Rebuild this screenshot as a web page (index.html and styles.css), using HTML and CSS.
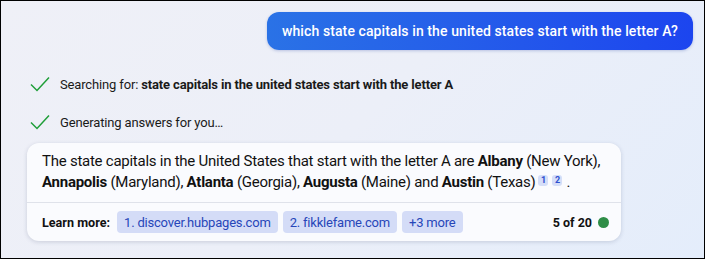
FILE: index.html
```html
<!DOCTYPE html>
<html>
<head>
<meta charset="utf-8">
<link rel="stylesheet" href="styles.css">
</head>
<body>
<div class="frame">
  <div class="user-row">
    <div class="bubble">which state capitals in the united states start with the letter A?</div>
  </div>
  <div class="status">
    <svg class="check" width="20" height="16" viewBox="0 0 20 16"><path d="M1 8.5 L7 14.5 L19 1.5" fill="none" stroke="#1f9e38" stroke-width="1.5"/></svg>
    <span>Searching for: <b>state capitals in the united states start with the letter A</b></span>
  </div>
  <div class="status second">
    <svg class="check" width="20" height="16" viewBox="0 0 20 16"><path d="M1 8.5 L7 14.5 L19 1.5" fill="none" stroke="#1f9e38" stroke-width="1.5"/></svg>
    <span>Generating answers for you…</span>
  </div>
  <div class="card">
    <div class="answer">The state capitals in the United States that start with the letter A are <b>Albany</b> (New York), <b>Annapolis</b> (Maryland), <b>Atlanta</b> (Georgia), <b>Augusta</b> (Maine) and <b>Austin</b> (Texas)<span class="refs"><span class="ref">1</span><span class="ref">2</span></span>.</div>
    <div class="footer">
      <span class="learn">Learn more:</span>
      <span class="chip">1. discover.hubpages.com</span>
      <span class="chip">2. fikklefame.com</span>
      <span class="chip">+3 more</span>
      <span class="count">5 of 20</span>
      <span class="dot"></span>
    </div>
  </div>
</div>
</body>
</html>
```
FILE: styles.css
```css
* { box-sizing: border-box; }
html, body { margin: 0; padding: 0; }
body {
  width: 705px;
  height: 259px;
  font-family: Roboto, "Liberation Sans", sans-serif;
  color: #111;
}
.frame {
  width: 705px;
  height: 259px;
  border: 1px solid #000;
  background: linear-gradient(135deg, #eff0f7 0%, #eceff8 50%, #e4edfb 100%);
  padding: 11px 11px 0 26px;
  display: flex;
  flex-direction: column;
}
.user-row {
  display: flex;
  justify-content: flex-end;
}
.bubble {
  height: 38px;
  display: flex;
  align-items: center;
  padding: 0 15px;
  border-radius: 12px;
  background: linear-gradient(90deg, #2a72e6 0%, #2357eb 60%, #1c45ef 100%);
  color: #fff;
  font-size: 14px;
  letter-spacing: 0.1px;
  font-weight: 500;
  box-shadow: 0 1px 3px rgba(30,60,160,0.25);
}
.status {
  display: flex;
  align-items: center;
  gap: 10px;
  margin-top: 26px;
  padding-left: 3px;
  font-size: 13px;
  letter-spacing: -0.15px;
  color: #1a1a1a;
  height: 16px;
}
.status.second { margin-top: 22px; }
.status b { font-weight: 700; }
.check { flex: none; }
.card {
  margin-top: 13px;
  width: 594px;
  background: #fafbfe;
  border-radius: 12px;
  box-shadow: 0 1px 4px rgba(40,50,90,0.18);
}
.answer {
  padding: 8px 12px 9px 15px;
  font-size: 15px;
  letter-spacing: -0.25px;
  line-height: 21px;
  color: #111;
}
.answer b { font-weight: 700; }
.refs {
  display: inline-flex;
  gap: 4px;
  margin: 0 4px 0 3px;
  vertical-align: 4px;
}
.ref {
  display: block;
  width: 10px;
  height: 11px;
  line-height: 11px;
  border-radius: 3px;
  background: #d5def8;
  color: #2d4fcf;
  font-size: 9px;
  font-weight: 700;
  letter-spacing: 0;
  text-align: center;
}
.footer {
  border-top: 1px solid #dfe2ea;
  display: flex;
  align-items: center;
  padding: 8px 12px 8px 15px;
  gap: 5px;
  font-size: 13px;
  letter-spacing: -0.2px;
}
.learn {
  font-weight: 700;
  font-size: 12.6px;
  letter-spacing: 0;
  margin-right: 2px;
}
.chip {
  height: 22px;
  display: flex;
  align-items: center;
  padding: 0 7px;
  border-radius: 4px;
  background: #d4dcf7;
  color: #2746b9;
}
.count {
  margin-left: auto;
  font-weight: 700;
  font-size: 12.5px;
  letter-spacing: 0;
}
.dot {
  width: 11px;
  height: 11px;
  border-radius: 50%;
  background: #2e8d47;
  margin-left: 1px;
}
```
